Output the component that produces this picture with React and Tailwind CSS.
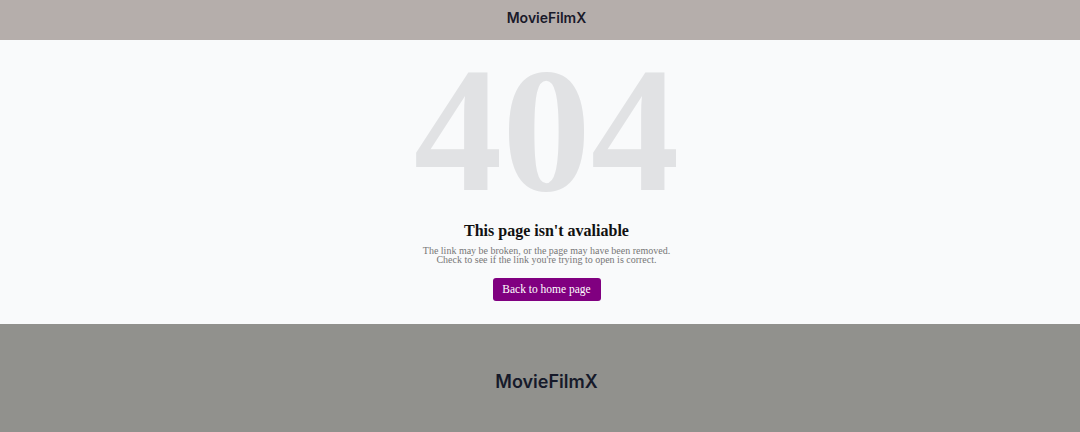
export default function App() {
  return (
    <div className="flex min-h-[432px] w-full flex-col bg-[#f9fafb] pl-[13px]">
      <header className="-ml-[13px] flex h-[40px] items-center justify-center bg-[#b5aeab] pb-[5px] pl-[13px]">
        <span className="text-[14px] font-semibold text-[#1a1a2a] [font-family:Inter,'Liberation_Sans',sans-serif]">MovieFilmX</span>
      </header>
      <main className="flex h-[284px] flex-col items-center bg-[#f9fafb] [font-family:'Liberation_Serif',serif]">
        <div className="mt-[2px] text-[177px] font-bold leading-none text-[#e1e2e4]">404</div>
        <h1 className="mt-[1px] text-[16px] font-bold leading-[22px] text-[#111]">This page isn't avaliable</h1>
        <p className="mt-[4px] text-center text-[10px] leading-[9px] text-[#777]">
          The link may be broken, or the page may have been removed.
          <br />
          Check to see if the link you're trying to open is correct.
        </p>
        <button className="mt-[14px] h-[23px] w-[108px] rounded-[3px] bg-[#800080] text-[11.5px] text-white">Back to home page</button>
      </main>
      <footer className="-ml-[13px] flex h-[108px] items-center justify-center bg-[#91918d] pl-[13px] pt-[6px]">
        <span className="text-[18px] font-semibold text-[#161a2a] [font-family:Inter,'Liberation_Sans',sans-serif]">MovieFilmX</span>
      </footer>
    </div>
  );
}
